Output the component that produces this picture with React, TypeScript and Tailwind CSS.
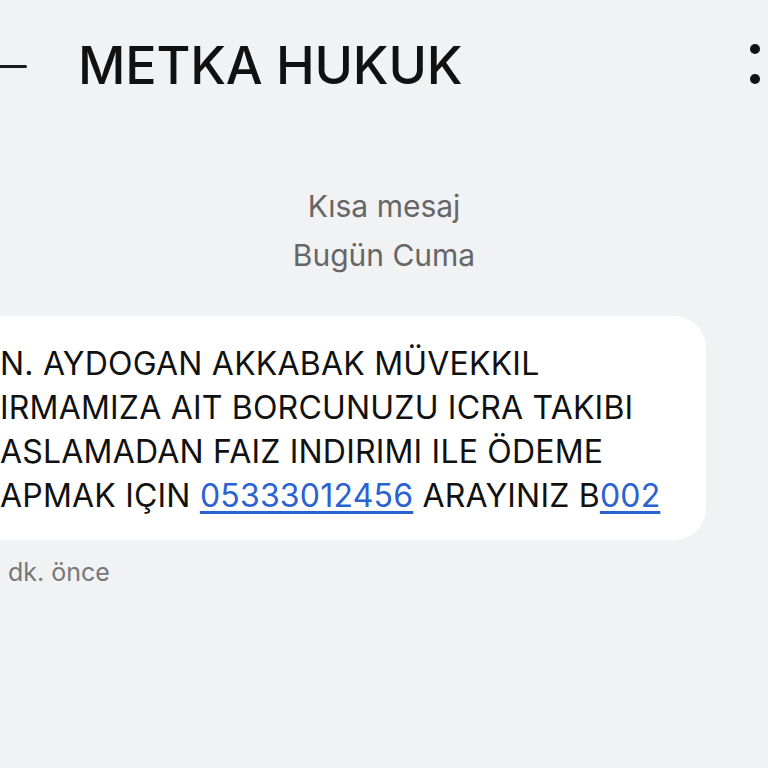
import React from 'react';

export default function App() {
  return (
    <div className="w-[768px] h-[768px] overflow-hidden bg-[#f1f2f4] font-['Inter','Noto_Sans',sans-serif] text-[#111]">
      {/* Header */}
      <div className="flex items-center h-[132px]">
        <div className="w-[27px] h-[3px] bg-[#1a1a1a] rounded-r-full" />
        <h1 className="ml-[51px] text-[52px] font-medium tracking-[-0.2px] leading-none">METKA HUKUK</h1>
        <div className="ml-auto mr-[8px] mb-[4px] flex flex-col gap-[20px]">
          <span className="block w-[10px] h-[10px] rounded-full bg-[#111]" />
          <span className="block w-[10px] h-[10px] rounded-full bg-[#111]" />
        </div>
      </div>

      {/* Date */}
      <div className="flex flex-col items-center text-[30px] leading-[49px] text-[#666] mt-[50px]">
        <span>Kısa mesaj</span>
        <span>Bugün Cuma</span>
      </div>

      {/* Bubble */}
      <div className="mt-[36px] w-[706px] bg-white rounded-r-[32px] pt-[26px] pb-[22px] text-[32px] tracking-[0.2px] leading-[44px] text-[#111]">
        <p>N. AYDOGAN AKKABAK MÜVEKKIL</p>
        <p>IRMAMIZA AIT BORCUNUZU ICRA TAKIBI</p>
        <p>ASLAMADAN FAIZ INDIRIMI ILE ÖDEME</p>
        <p>
          APMAK IÇIN <span className="text-[#2a62d0] underline underline-offset-[4px]">05333012456</span> ARAYINIZ B
          <span className="text-[#2a62d0] underline underline-offset-[4px]">002</span>
        </p>
      </div>

      <div className="mt-[14px] pl-[8px] text-[25px] text-[#777]">dk. önce</div>
    </div>
  );
}
